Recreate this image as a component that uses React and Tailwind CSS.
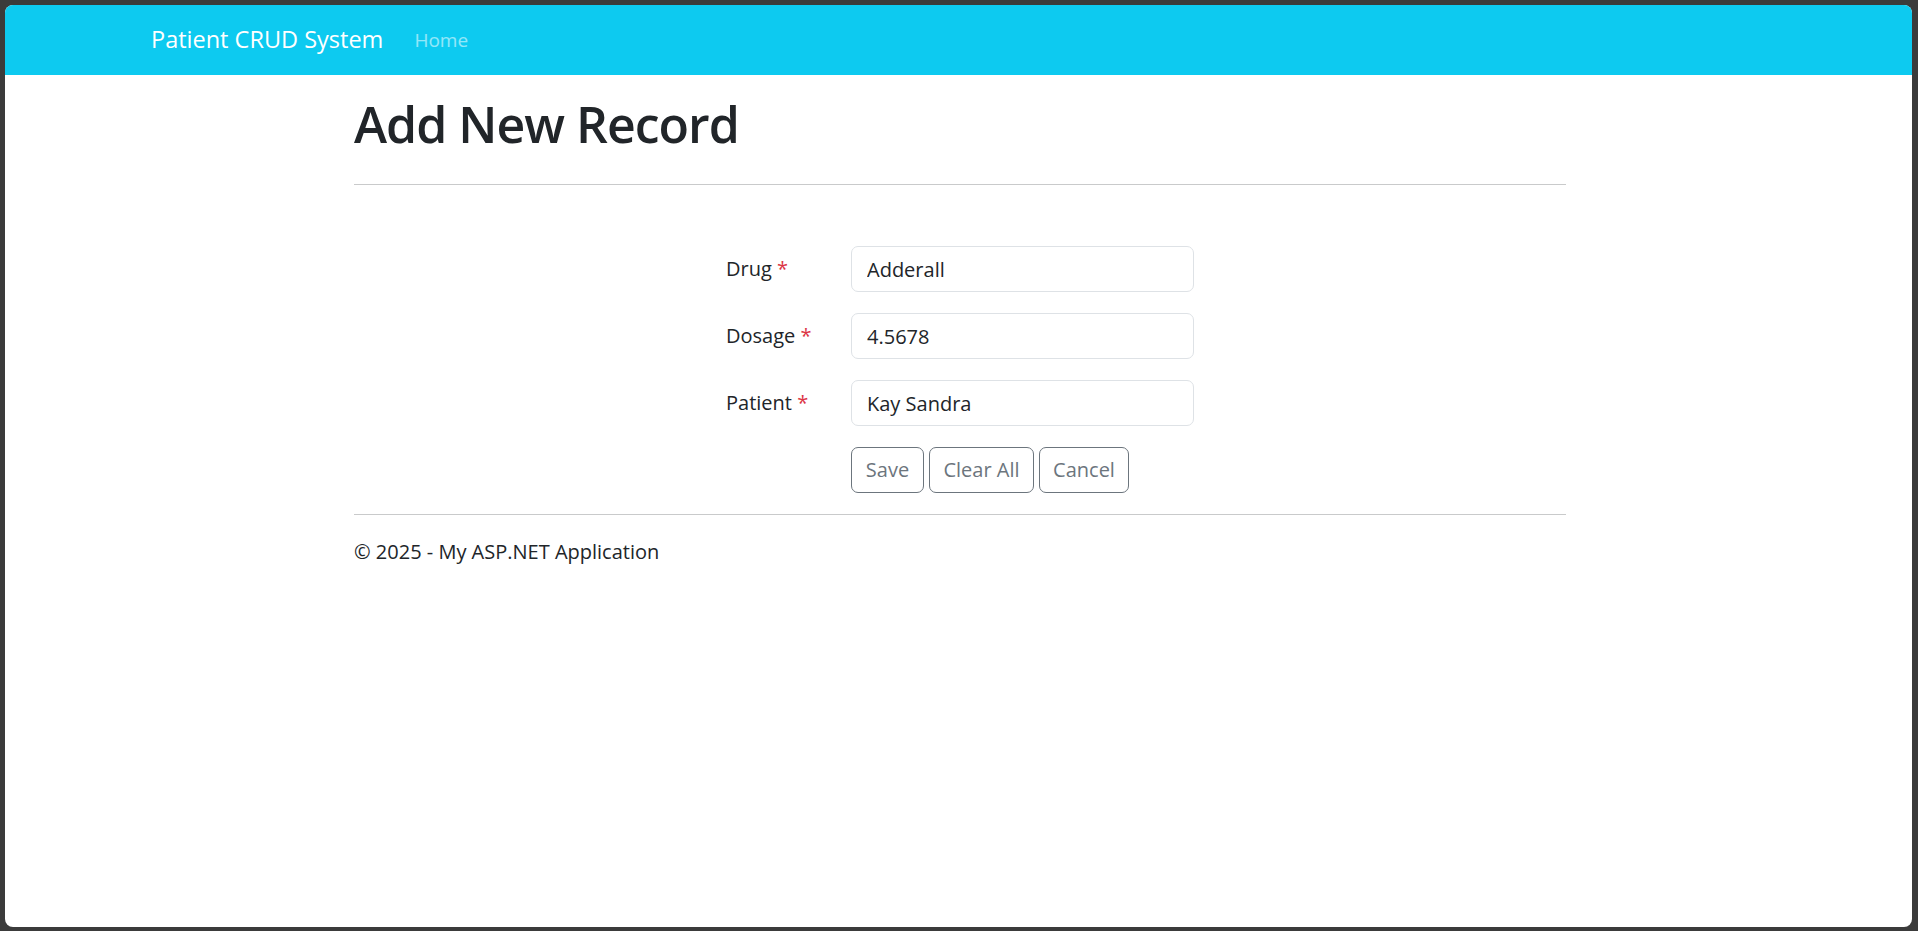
import { useState } from 'react'

const font = { fontFamily: '"Open Sans", "Noto Sans", sans-serif' }

function Field({ label, value, onChange }) {
  return (
    <div className="flex flex-row items-center">
      <label className="w-[125px] text-[20px] text-[#212529]">
        {label} <span className="text-[#dc3545]">*</span>
      </label>
      <input
        type="text"
        value={value}
        onChange={e => onChange(e.target.value)}
        className="w-[343px] h-[46px] px-[15px] text-[20px] text-[#212529] bg-white border border-[#dee2e6] rounded-[7px] outline-none"
      />
    </div>
  )
}

export default function App() {
  const [drug, setDrug] = useState("Adderall")
  const [dosage, setDosage] = useState("4.5678")
  const [patient, setPatient] = useState("Kay Sandra")

  function clearAll() {
    setDrug("")
    setDosage("")
    setPatient("")
  }

  return (
    <div className="h-screen bg-[#3b3b3b] pt-[5px] pl-[5px] pr-[6px] pb-[4px]" style={font}>
      <div className="h-full bg-white rounded-[8px] overflow-hidden">
        <nav className="h-[70px] bg-[#0dcaf0] flex flex-row items-center pl-[146px]">
          <a className="text-[23.5px] text-white" href="#">Patient CRUD System</a>
          <a className="ml-[31px] text-[19px] text-white/55" href="#">Home</a>
        </nav>

        <div className="w-[1212px] ml-[349px] pt-[19px]">
          <h1 className="text-[50px] leading-[60px] font-semibold tracking-[-1px] text-[#212529]">Add New Record</h1>
          <hr className="mt-[30px] border-0 border-t border-[#c9cacb]" />

          <div className="flex justify-center pt-[61px]">
            <div className="flex flex-col gap-[21px]">
              <Field label="Drug" value={drug} onChange={setDrug} />
              <Field label="Dosage" value={dosage} onChange={setDosage} />
              <Field label="Patient" value={patient} onChange={setPatient} />
              <div className="flex flex-row gap-[5px] pl-[125px]">
                <button className="h-[46px] w-[73px] text-[20px] text-[#6c757d] border border-[#6c757d] rounded-[7px]">Save</button>
                <button onClick={clearAll} className="h-[46px] w-[105px] text-[20px] text-[#6c757d] border border-[#6c757d] rounded-[7px]">Clear All</button>
                <button className="h-[46px] w-[90px] text-[20px] text-[#6c757d] border border-[#6c757d] rounded-[7px]">Cancel</button>
              </div>
            </div>
          </div>

          <hr className="mt-[21px] border-0 border-t border-[#c9cacb]" />
          <footer className="pt-[22px]">
            <p className="text-[20px] leading-[30px] text-[#212529]">© 2025 - My ASP.NET Application</p>
          </footer>
        </div>
      </div>
    </div>
  )
}
